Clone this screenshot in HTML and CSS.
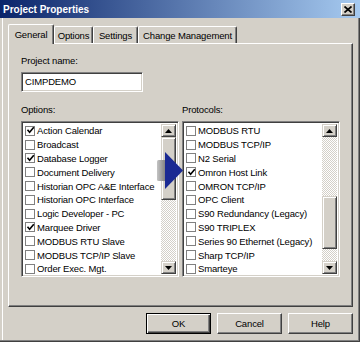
FILE: index.html
```html
<!DOCTYPE html>
<html lang="en">
<head>
    <meta charset="UTF-8">
    <title>Project Properties</title>
    <link rel="stylesheet" href="styles.css">
</head>
<body>

    <div class="window">
        <!-- Title Bar -->
        <div class="titlebar">
            <span class="title">Project Properties</span>
            <span class="close-btn">
                <svg width="8" height="7" viewBox="0 0 8 7"><path d="M0.5 0.5 L7.5 6.5 M7.5 0.5 L0.5 6.5" stroke="#000" stroke-width="1.7"/></svg>
            </span>
        </div>

        <!-- Tabs -->
        <div class="tabs">
            <div class="tab active tab-general">General</div>
            <div class="tab tab-options">Options</div>
            <div class="tab tab-settings">Settings</div>
            <div class="tab tab-change">Change Management</div>
        </div>

        <!-- General Panel -->
        <div class="panel">
            <div class="field-label">Project name:</div>
            <div class="textbox">CIMPDEMO</div>

            <div class="lists">
                <div class="list-group">
                    <div class="field-label">Options:</div>
                    <div class="listbox">
                        <div class="items">
                            <div class="item"><span class="check checked"><svg viewBox="0 0 9 9"><path d="M1.5 3.8 L3.6 6.2 L7.8 1.2"/></svg></span>Action Calendar</div>
                            <div class="item"><span class="check"></span>Broadcast</div>
                            <div class="item"><span class="check checked"><svg viewBox="0 0 9 9"><path d="M1.5 3.8 L3.6 6.2 L7.8 1.2"/></svg></span>Database Logger</div>
                            <div class="item"><span class="check"></span>Document Delivery</div>
                            <div class="item"><span class="check"></span>Historian OPC A&amp;E Interface</div>
                            <div class="item"><span class="check"></span>Historian OPC Interface</div>
                            <div class="item"><span class="check"></span>Logic Developer - PC</div>
                            <div class="item"><span class="check checked"><svg viewBox="0 0 9 9"><path d="M1.5 3.8 L3.6 6.2 L7.8 1.2"/></svg></span>Marquee Driver</div>
                            <div class="item"><span class="check"></span>MODBUS RTU Slave</div>
                            <div class="item"><span class="check"></span>MODBUS TCP/IP Slave</div>
                            <div class="item"><span class="check"></span>Order Exec. Mgt.</div>
                        </div>
                        <div class="scrollbar">
                            <div class="scroll-btn"><svg width="7" height="4" viewBox="0 0 7 4"><path d="M3.5 0 L7 4 L0 4 Z"/></svg></div>
                            <div class="thumb thumb-left"></div>
                            <div class="track"></div>
                            <div class="scroll-btn"><svg width="7" height="4" viewBox="0 0 7 4"><path d="M0 0 L7 0 L3.5 4 Z"/></svg></div>
                        </div>
                    </div>
                </div>

                <div class="list-group">
                    <div class="field-label">Protocols:</div>
                    <div class="listbox">
                        <div class="items">
                            <div class="item"><span class="check"></span>MODBUS RTU</div>
                            <div class="item"><span class="check"></span>MODBUS TCP/IP</div>
                            <div class="item"><span class="check"></span>N2 Serial</div>
                            <div class="item"><span class="check checked"><svg viewBox="0 0 9 9"><path d="M1.5 3.8 L3.6 6.2 L7.8 1.2"/></svg></span>Omron Host Link</div>
                            <div class="item"><span class="check"></span>OMRON TCP/IP</div>
                            <div class="item"><span class="check"></span>OPC Client</div>
                            <div class="item"><span class="check"></span>S90 Redundancy (Legacy)</div>
                            <div class="item"><span class="check"></span>S90 TRIPLEX</div>
                            <div class="item"><span class="check"></span>Series 90 Ethernet (Legacy)</div>
                            <div class="item"><span class="check"></span>Sharp TCP/IP</div>
                            <div class="item"><span class="check"></span>Smarteye</div>
                        </div>
                        <div class="scrollbar">
                            <div class="scroll-btn"><svg width="7" height="4" viewBox="0 0 7 4"><path d="M3.5 0 L7 4 L0 4 Z"/></svg></div>
                            <div class="track track-top"></div>
                            <div class="thumb thumb-right"></div>
                            <div class="track"></div>
                            <div class="scroll-btn"><svg width="7" height="4" viewBox="0 0 7 4"><path d="M0 0 L7 0 L3.5 4 Z"/></svg></div>
                        </div>
                    </div>
                </div>
            </div>
        </div>

        <!-- Dialog Buttons -->
        <div class="buttons">
            <div class="btn default">OK</div>
            <div class="btn">Cancel</div>
            <div class="btn">Help</div>
        </div>

        <!-- Pointer arrow laid over the lists -->
        <svg class="pointer" width="27" height="37" viewBox="0 0 27 37">
            <defs>
                <linearGradient id="stub" x1="0" x2="1" y1="0" y2="0">
                    <stop offset="0" stop-color="#c4c4c4"/>
                    <stop offset="1" stop-color="#7c7c7c"/>
                </linearGradient>
            </defs>
            <rect x="0" y="8" width="9" height="21" rx="1.5" fill="url(#stub)"/>
            <path d="M8 0 L26 18.5 L8 37 Z" fill="#1b2a93"/>
        </svg>
    </div>

</body>
</html>
```

FILE: styles.css
```css
/* General Reset */
* {
    margin: 0;
    padding: 0;
    box-sizing: border-box;
}

body {
    font-family: "Liberation Sans", Arial, sans-serif;
    font-size: 9.5px;
    letter-spacing: -0.15px;
    color: #000;
    background-color: #d4d0c8;
}

/* Window Frame */
.window {
    position: relative;
    width: 360px;
    height: 342px;
    background-color: #d4d0c8;
    box-shadow: inset -1px -1px #404040, inset -2px -2px #808080, inset 2px 2px #d4d0c8, inset 3px 3px #fff;
}

/* Title Bar */
.titlebar {
    height: 18px;
    display: flex;
    align-items: center;
    justify-content: space-between;
    padding: 0 5px 0 3px;
    background: linear-gradient(to right, #0a246a, #a6caf0);
    color: #fff;
}

.title {
    font-size: 10px;
    font-weight: bold;
    letter-spacing: 0;
}

.close-btn {
    width: 14px;
    height: 13px;
    display: flex;
    align-items: center;
    justify-content: center;
    background-color: #d4d0c8;
    border-top: 1px solid #fff;
    border-left: 1px solid #fff;
    border-right: 1px solid #404040;
    border-bottom: 1px solid #404040;
    box-shadow: inset -1px -1px #808080;
}

/* Tabs */
.tabs {
    display: flex;
    align-items: flex-end;
    height: 19px;
    margin-top: 6px;
    padding-left: 8px;
}

.tab {
    height: 17px;
    display: flex;
    align-items: center;
    justify-content: center;
    border-top: 1px solid #fff;
    border-left: 1px solid #fff;
    border-right: 1px solid #404040;
    border-radius: 2px 2px 0 0;
    box-shadow: inset -1px 0 #808080;
    background-color: #d4d0c8;
    white-space: nowrap;
}

.tab.active {
    position: relative;
    z-index: 1;
    height: 20px;
    margin-bottom: -1px;
    padding-bottom: 1px;
}

.tab-general { width: 46px; }
.tab-options { width: 39px; }
.tab-settings { width: 45px; }
.tab-change { width: 99px; }

/* Tab Panel */
.panel {
    width: 345px;
    height: 264px;
    margin-left: 8px;
    padding: 11px 12px 0 12px;
    border-top: 1px solid #fff;
    border-left: 1px solid #fff;
    border-right: 1px solid #404040;
    border-bottom: 1px solid #404040;
    box-shadow: inset -1px -1px #808080;
}

.field-label {
    line-height: 12px;
    height: 12px;
}

/* Sunken boxes */
.textbox,
.listbox {
    background-color: #fff;
    border-top: 1px solid #808080;
    border-left: 1px solid #808080;
    border-right: 1px solid #fff;
    border-bottom: 1px solid #fff;
    box-shadow: inset 1px 1px #404040, inset -1px -1px #d4d0c8;
}

.textbox {
    width: 122px;
    height: 20px;
    margin-top: 5px;
    padding-left: 3px;
    line-height: 18px;
}

/* Lists */
.lists {
    display: flex;
    gap: 3px;
    margin-top: 12px;
}

.listbox {
    width: 158px;
    height: 156px;
    margin-top: 5px;
    padding: 1px;
    display: flex;
    overflow: hidden;
}

.items {
    flex: 1;
    overflow: hidden;
    padding-top: 1px;
}

.item {
    height: 13.8px;
    display: flex;
    align-items: center;
    padding-left: 2px;
    white-space: nowrap;
}

.check {
    width: 10px;
    height: 10px;
    flex-shrink: 0;
    margin-right: 2px;
    background-color: #fff;
    border: 1px solid #808080;
    display: flex;
    align-items: center;
    justify-content: center;
}

.check svg {
    width: 9px;
    height: 9px;
    overflow: visible;
}

.check path {
    fill: none;
    stroke: #000;
    stroke-width: 1.6;
}

/* Scrollbar */
.scrollbar {
    width: 15px;
    margin: 1px 1px 1px 0;
    display: flex;
    flex-direction: column;
    flex-shrink: 0;
}

.scroll-btn,
.thumb {
    background-color: #d4d0c8;
    border-top: 1px solid #d4d0c8;
    border-left: 1px solid #d4d0c8;
    border-right: 1px solid #404040;
    border-bottom: 1px solid #404040;
    box-shadow: inset 1px 1px #fff, inset -1px -1px #808080;
}

.scroll-btn {
    height: 13px;
    display: flex;
    align-items: center;
    justify-content: center;
}

.track {
    flex: 1;
    background: repeating-conic-gradient(#d4d0c8 0 25%, #fff 0 50%) 0 0 / 2px 2px;
}

.track-top {
    flex: 0 0 59px;
}

.thumb-left { height: 63px; }
.thumb-right { height: 53px; }

/* Dialog Buttons */
.buttons {
    display: flex;
    justify-content: flex-end;
    gap: 6px;
    margin-top: 6px;
    padding-right: 7px;
}

.btn {
    width: 65px;
    height: 21px;
    display: flex;
    align-items: center;
    justify-content: center;
    border-top: 1px solid #fff;
    border-left: 1px solid #fff;
    border-right: 1px solid #404040;
    border-bottom: 1px solid #404040;
    box-shadow: inset -1px -1px #808080;
}

.btn.default {
    border: 1px solid #000;
    box-shadow: inset 1px 1px #fff, inset -1px -1px #404040, inset -2px -2px #808080;
}

/* Annotation arrow */
.pointer {
    position: absolute;
    left: 157px;
    top: 152px;
}
```
